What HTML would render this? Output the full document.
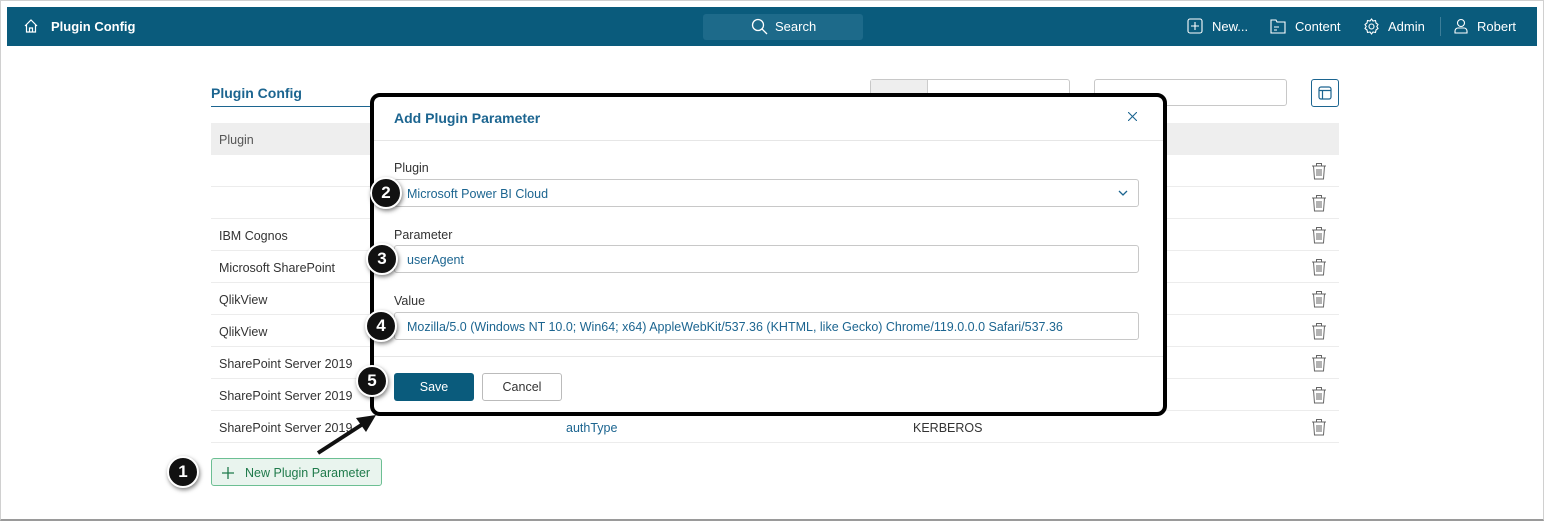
<!DOCTYPE html>
<html><head><style>
*{box-sizing:border-box;margin:0;padding:0}
body{width:1544px;height:521px;background:#fff;font-family:"Liberation Sans",sans-serif;position:relative;overflow:hidden}
.frame{position:absolute;left:0;top:0;width:1544px;height:521px;border:1px solid #d0d0d0;border-bottom:2px solid #9a9a9a}
.hdr{position:absolute;left:7px;top:7px;width:1530px;height:39px;background:#0a5b7c;color:#fff;font-size:13px}
.hdr .t{position:absolute;top:12px}
.abs{position:absolute}
.row{position:absolute;left:211px;width:1128px;height:32px;border-bottom:1px solid #ececec;font-size:12.5px;color:#333}
.row span{position:absolute;left:8px;top:10px}
.trash{position:absolute;left:1100px;top:7px}
.modal{position:absolute;left:370px;top:93px;width:797px;height:323px;background:#fff;border:4px solid #000;border-radius:10px}
.lbl{position:absolute;left:20px;font-size:12.5px;color:#333}
.inp{position:absolute;left:20px;width:745px;height:28px;border:1px solid #c8c8c8;border-radius:3px;font-size:12.5px;color:#1c6590;padding:7px 12px}
.badge{position:absolute;width:32px;height:32px;border-radius:50%;background:#111;border:2px solid #fff;box-shadow:1px 2px 4px rgba(0,0,0,.5);color:#fff;font-weight:bold;font-size:17px;text-align:center;line-height:28px}
</style></head><body>
<div class="frame"></div>
<div class="hdr">
<svg class="abs" style="left:16px;top:11px" width="16" height="16" viewBox="0 0 16 16" fill="none" stroke="#fff" stroke-width="1.2"><path d="M2 8L8 2l6 6M3.5 6.5V14h9V6.5M6.5 14v-4h3v4"/></svg>
<span class="t" style="left:44px;font-weight:bold">Plugin Config</span>
<div class="abs" style="left:696px;top:7px;width:160px;height:26px;background:#1d6a8a;border-radius:3px"></div>
<svg class="abs" style="left:744px;top:11px" width="17" height="17" viewBox="0 0 17 17" fill="none" stroke="#fff" stroke-width="1.3"><circle cx="7" cy="7" r="5.5"/><path d="M11 11l5 5"/></svg>
<span class="t" style="left:768px">Search</span>
<svg class="abs" style="left:1180px;top:11px" width="16" height="16" viewBox="0 0 16 16" fill="none" stroke="#fff" stroke-width="1.1"><rect x="1" y="1" width="14" height="14" rx="2"/><path d="M8 4v8M4 8h8"/></svg>
<span class="t" style="left:1205px">New...</span>
<svg class="abs" style="left:1263px;top:11px" width="16" height="16" viewBox="0 0 16 16" fill="none" stroke="#fff" stroke-width="1.1"><path d="M1 2h5l1 2h8v11H1z M4 9h5M4 12h3"/></svg>
<span class="t" style="left:1288px">Content</span>
<svg class="abs" style="left:1356px;top:11px" width="17" height="17" viewBox="0 0 17 17" fill="none" stroke="#fff" stroke-width="1.1"><circle cx="8.5" cy="8.5" r="2.5"/><path d="M8.5 1l1.5 2 2.5-.5.5 2.5 2 1.5-1.2 2 1.2 2-2 1.5-.5 2.5-2.5-.5-1.5 2-1.5-2-2.5.5-.5-2.5-2-1.5 1.2-2-1.2-2 2-1.5.5-2.5 2.5.5z"/></svg>
<span class="t" style="left:1381px">Admin</span>
<div class="abs" style="left:1433px;top:10px;width:1px;height:19px;background:#3d7e99"></div>
<svg class="abs" style="left:1446px;top:11px" width="16" height="16" viewBox="0 0 16 16" fill="none" stroke="#fff" stroke-width="1.1"><circle cx="8" cy="5" r="3.5"/><path d="M2 15v-2a3 3 0 013-3h6a3 3 0 013 3v2z"/></svg>
<span class="t" style="left:1470px">Robert</span>
</div>

<div class="abs" style="left:211px;top:85px;font-size:14px;font-weight:bold;color:#1c6590">Plugin Config</div>
<div class="abs" style="left:211px;top:106px;width:160px;height:1px;background:#1c6590"></div>
<div class="abs" style="left:870px;top:79px;width:200px;height:27px;border:1px solid #c8c8c8;border-radius:3px"><div style="width:57px;height:100%;background:#eee;border-right:1px solid #ccc"></div></div>
<div class="abs" style="left:1094px;top:79px;width:193px;height:27px;border:1px solid #c8c8c8;border-radius:3px"></div>
<div class="abs" style="left:1311px;top:79px;width:28px;height:28px;border:1px solid #1c6590;border-radius:3px"><svg style="margin:6px" width="14" height="14" viewBox="0 0 14 14" fill="none" stroke="#1c6590" stroke-width="1.2"><rect x="1" y="1" width="12" height="12" rx="2"/><path d="M1 4.5h12M4.5 4.5V13"/></svg></div>

<div class="abs" style="left:211px;top:123px;width:1128px;height:32px;background:#eeeeee;font-size:12.5px;color:#555"><span style="position:absolute;left:8px;top:10px">Plugin</span></div>

<div class="row" style="top:155px"><svg class="trash" width="16" height="18" viewBox="0 0 16 18" fill="none" stroke="#666" stroke-width="1"><path d="M1 4h14M5.5 4V1.5h5V4M2.5 4l1 13h9l1-13M6 7v7M8 7v7M10 7v7"/></svg></div>
<div class="row" style="top:187px"><svg class="trash" width="16" height="18" viewBox="0 0 16 18" fill="none" stroke="#666" stroke-width="1"><path d="M1 4h14M5.5 4V1.5h5V4M2.5 4l1 13h9l1-13M6 7v7M8 7v7M10 7v7"/></svg></div>
<div class="row" style="top:219px"><span>IBM Cognos</span><svg class="trash" width="16" height="18" viewBox="0 0 16 18" fill="none" stroke="#666" stroke-width="1"><path d="M1 4h14M5.5 4V1.5h5V4M2.5 4l1 13h9l1-13M6 7v7M8 7v7M10 7v7"/></svg></div>
<div class="row" style="top:251px"><span>Microsoft SharePoint</span><svg class="trash" width="16" height="18" viewBox="0 0 16 18" fill="none" stroke="#666" stroke-width="1"><path d="M1 4h14M5.5 4V1.5h5V4M2.5 4l1 13h9l1-13M6 7v7M8 7v7M10 7v7"/></svg></div>
<div class="row" style="top:283px"><span>QlikView</span><svg class="trash" width="16" height="18" viewBox="0 0 16 18" fill="none" stroke="#666" stroke-width="1"><path d="M1 4h14M5.5 4V1.5h5V4M2.5 4l1 13h9l1-13M6 7v7M8 7v7M10 7v7"/></svg></div>
<div class="row" style="top:315px"><span>QlikView</span><svg class="trash" width="16" height="18" viewBox="0 0 16 18" fill="none" stroke="#666" stroke-width="1"><path d="M1 4h14M5.5 4V1.5h5V4M2.5 4l1 13h9l1-13M6 7v7M8 7v7M10 7v7"/></svg></div>
<div class="row" style="top:347px"><span>SharePoint Server 2019</span><svg class="trash" width="16" height="18" viewBox="0 0 16 18" fill="none" stroke="#666" stroke-width="1"><path d="M1 4h14M5.5 4V1.5h5V4M2.5 4l1 13h9l1-13M6 7v7M8 7v7M10 7v7"/></svg></div>
<div class="row" style="top:379px"><span>SharePoint Server 2019</span><svg class="trash" width="16" height="18" viewBox="0 0 16 18" fill="none" stroke="#666" stroke-width="1"><path d="M1 4h14M5.5 4V1.5h5V4M2.5 4l1 13h9l1-13M6 7v7M8 7v7M10 7v7"/></svg></div>
<div class="row" style="top:411px"><span>SharePoint Server 2019</span><span style="left:355px;color:#1c6590">authType</span><span style="left:702px">KERBEROS</span><svg class="trash" width="16" height="18" viewBox="0 0 16 18" fill="none" stroke="#666" stroke-width="1"><path d="M1 4h14M5.5 4V1.5h5V4M2.5 4l1 13h9l1-13M6 7v7M8 7v7M10 7v7"/></svg></div>

<div class="abs" style="left:211px;top:458px;width:171px;height:28px;background:#e9f4ee;border:1px solid #6cbf93;border-radius:3px;color:#1f7a4b;font-size:12.5px"><svg style="position:absolute;left:10px;top:8px" width="12" height="12" viewBox="0 0 12 12" stroke="#1f7a4b" stroke-width="1.3"><path d="M6 0v12M0 6h12"/></svg><span style="position:absolute;left:33px;top:7px">New Plugin Parameter</span></div>

<div class="modal">
<div class="abs" style="left:20px;top:13px;font-size:14px;font-weight:bold;color:#1c6590">Add Plugin Parameter</div>
<svg class="abs" style="left:754px;top:15px" width="9" height="9" viewBox="0 0 9 9" stroke="#1c6590" stroke-width="1.1"><path d="M0 0l9 9M9 0L0 9"/></svg>
<div class="abs" style="left:0;top:43px;width:789px;height:1px;background:#e6e6e6"></div>
<div class="lbl" style="top:64px">Plugin</div>
<div class="inp" style="top:82px">Microsoft Power BI Cloud<svg style="position:absolute;right:10px;top:10px" width="10" height="6" viewBox="0 0 10 6" fill="none" stroke="#1c6590" stroke-width="1.3"><path d="M1 1l4 4 4-4"/></svg></div>
<div class="lbl" style="top:131px">Parameter</div>
<div class="inp" style="top:148px">userAgent</div>
<div class="lbl" style="top:197px">Value</div>
<div class="inp" style="top:215px">Mozilla/5.0 (Windows NT 10.0; Win64; x64) AppleWebKit/537.36 (KHTML, like Gecko) Chrome/119.0.0.0 Safari/537.36</div>
<div class="abs" style="left:0;top:259px;width:789px;height:1px;background:#e6e6e6"></div>
<div class="abs" style="left:20px;top:276px;width:80px;height:28px;background:#0a5b7c;border-radius:3px;color:#fff;font-size:12.5px;text-align:center;line-height:28px">Save</div>
<div class="abs" style="left:108px;top:276px;width:80px;height:28px;border:1px solid #bbb;border-radius:3px;color:#333;font-size:12.5px;text-align:center;line-height:26px">Cancel</div>
</div>

<svg class="abs" style="left:300px;top:405px" width="90" height="60"><path d="M18 48L66 17" stroke="#111" stroke-width="4"/><path d="M76 10L56 13 66 27z" fill="#111"/></svg>

<div class="badge" style="left:167px;top:456px">1</div>
<div class="badge" style="left:370px;top:177px">2</div>
<div class="badge" style="left:366px;top:243px">3</div>
<div class="badge" style="left:365px;top:310px">4</div>
<div class="badge" style="left:356px;top:365px">5</div>
</body></html>
